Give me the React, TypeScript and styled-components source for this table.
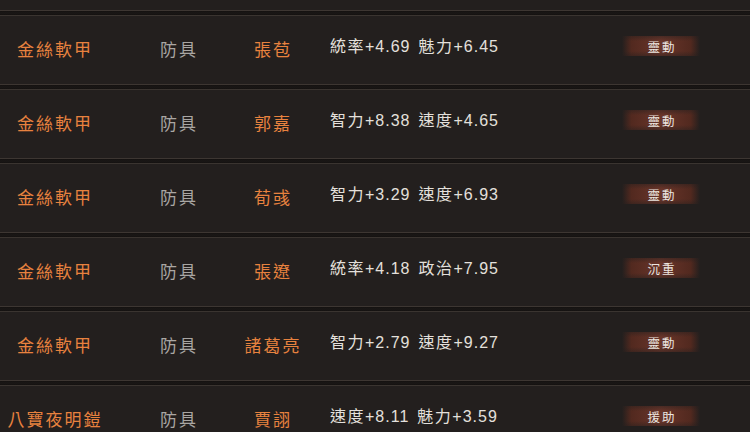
import React from "react";
import styled, { createGlobalStyle } from "styled-components";

const Global = createGlobalStyle`
  html, body { margin: 0; padding: 0; background: #221e1d; }
  body { width: 750px; height: 432px; overflow: hidden; }
`;

const Page = styled.div`
  width: 750px;
  height: 432px;
  overflow: hidden;
  background: #231f1e;
  padding-top: 10px;
  box-sizing: border-box;
  font-family: "Noto Sans CJK TC", "Noto Sans CJK SC", sans-serif;
`;

const Separator = styled.div`
  height: 6px;
  box-sizing: border-box;
  border-top: 1px solid #3d3632;
  border-bottom: 1px solid #3a3430;
  background: linear-gradient(to bottom, #141110 0%, #1a1716 50%, #141110 100%);
`;

const Row = styled.div`
  height: 68px;
  display: flex;
  align-items: center;
`;

const NameCell = styled.div`
  width: 108px;
  text-align: center;
  color: #e8823f;
  font-size: 17px;
  letter-spacing: 2px;
  text-indent: 2px;
  white-space: nowrap;
  margin-bottom: 3px;
`;

const TypeCell = styled.div`
  width: 108px;
  margin-left: 16px;
  text-align: center;
  color: #a9a6a3;
  font-size: 17px;
  letter-spacing: 2px;
  text-indent: 2px;
  white-space: nowrap;
  margin-bottom: 3px;
`;

const GeneralCell = styled.div`
  width: 80px;
  text-align: center;
  color: #e8823f;
  font-size: 17px;
  letter-spacing: 2px;
  text-indent: 2px;
  white-space: nowrap;
  margin-bottom: 3px;
`;

const StatsCell = styled.div`
  width: 292px;
  margin-left: 18px;
  color: #e4e0dc;
  font-size: 16px;
  letter-spacing: 1px;
  white-space: nowrap;
  margin-bottom: 10px;
  font-family: "Liberation Sans", "Noto Sans CJK TC", sans-serif;
`;

const StatLabel = styled.span`
  font-family: "Noto Sans CJK TC", sans-serif;
  letter-spacing: 1.5px;
`;

const Stat = styled.span<{ $first?: boolean }>`
  margin-left: ${(p) => (p.$first ? 0 : 8)}px;
`;

const Badge = styled.div`
  width: 78px;
  height: 20px;
  display: flex;
  align-items: center;
  justify-content: center;
  color: #ece6e0;
  font-size: 12.5px;
  letter-spacing: 2px;
  text-indent: 2px;
  margin-bottom: 8px;
  background:
    linear-gradient(to bottom, rgba(35,31,30,0.45) 0%, rgba(35,31,30,0) 25%, rgba(35,31,30,0) 75%, rgba(35,31,30,0.45) 100%),
    linear-gradient(to right, rgba(70,36,28,0) 0%, #52291f 12%, #69352a 50%, #52291f 88%, rgba(70,36,28,0) 100%);
`;

type Item = {
  name: string;
  general: string;
  stats: [string, string][];
  trait: string;
};

const items: Item[] = [
  { name: "金絲軟甲", general: "張苞", stats: [["統率", "+4.69"], ["魅力", "+6.45"]], trait: "靈動" },
  { name: "金絲軟甲", general: "郭嘉", stats: [["智力", "+8.38"], ["速度", "+4.65"]], trait: "靈動" },
  { name: "金絲軟甲", general: "荀彧", stats: [["智力", "+3.29"], ["速度", "+6.93"]], trait: "靈動" },
  { name: "金絲軟甲", general: "張遼", stats: [["統率", "+4.18"], ["政治", "+7.95"]], trait: "沉重" },
  { name: "金絲軟甲", general: "諸葛亮", stats: [["智力", "+2.79"], ["速度", "+9.27"]], trait: "靈動" },
  { name: "八寶夜明鎧", general: "賈詡", stats: [["速度", "+8.11"], ["魅力", "+3.59"]], trait: "援助" },
];

export default function App() {
  return (
    <>
      <Global />
      <Page>
        {items.map((it, i) => (
          <React.Fragment key={i}>
            <Separator />
            <Row>
              <NameCell>{it.name}</NameCell>
              <TypeCell>防具</TypeCell>
              <GeneralCell>{it.general}</GeneralCell>
              <StatsCell>
                {it.stats.map(([label, val], j) => (
                  <Stat key={j} $first={j === 0}>
                    <StatLabel>{label}</StatLabel>
                    {val}
                  </Stat>
                ))}
              </StatsCell>
              <Badge>{it.trait}</Badge>
            </Row>
          </React.Fragment>
        ))}
      </Page>
    </>
  );
}
